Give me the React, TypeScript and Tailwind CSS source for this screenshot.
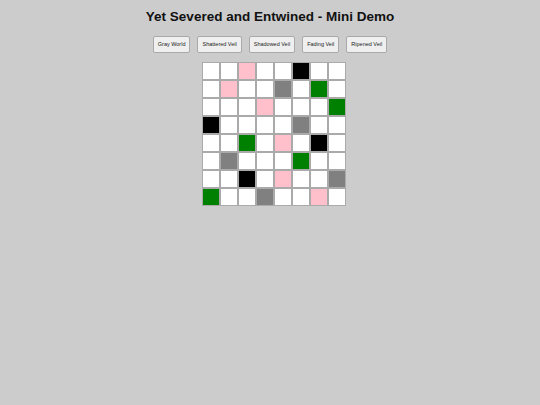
const W = "bg-white";
const P = "bg-[#ffc0cb]";
const K = "bg-black";
const G = "bg-[#808080]";
const N = "bg-[#008000]";

const rows: string[][] = [
  [W, W, P, W, W, K, W, W],
  [W, P, W, W, G, W, N, W],
  [W, W, W, P, W, W, W, N],
  [K, W, W, W, W, G, W, W],
  [W, W, N, W, P, W, K, W],
  [W, G, W, W, W, N, W, W],
  [W, W, K, W, P, W, W, G],
  [N, W, W, G, W, W, P, W],
];

const veils = ["Gray World", "Shattered Veil", "Shadowed Veil", "Fading Veil", "Ripened Veil"];

export default function App() {
  return (
    <div className="w-[540px] h-[405px] bg-[#cccccc] flex flex-col items-center font-['Liberation_Sans',Arial,sans-serif]">
      <h1 className="mt-[8px] text-[13.5px] leading-[18px] font-bold text-[#111]">
        Yet Severed and Entwined - Mini Demo
      </h1>

      <div className="mt-[10px] flex gap-[7px]">
        {veils.map((v) => (
          <button
            key={v}
            className="h-[17px] px-[4px] text-[5.5px] text-[#222] bg-[#efefef] border border-[#a9a9a9] rounded-[2px]"
          >
            {v}
          </button>
        ))}
      </div>

      <div className="mt-[9px] ml-[7px] grid grid-cols-8">
        {rows.map((row, r) =>
          row.map((c, i) => (
            <div key={r + "-" + i} className={"w-[18px] h-[18px] border border-[#aaaaaa] " + c} />
          ))
        )}
      </div>
    </div>
  );
}
